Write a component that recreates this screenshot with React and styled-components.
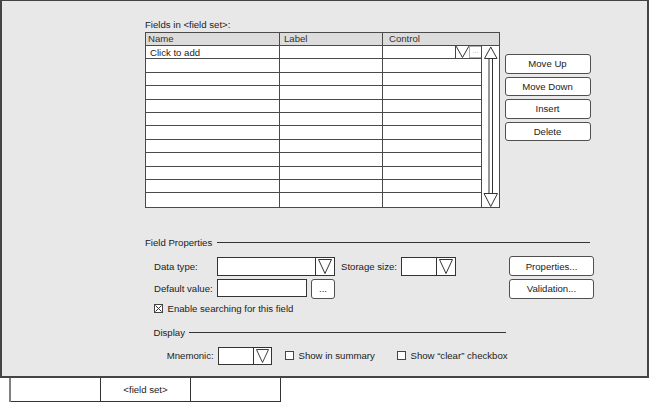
import React from "react";
import styled, { createGlobalStyle } from "styled-components";

const GlobalStyle = createGlobalStyle`
  * { box-sizing: border-box; }
  html, body { margin: 0; padding: 0; background: #fff; }
  body {
    font-family: "Liberation Sans", Arial, sans-serif;
    font-size: 9.6px;
    color: #222;
  }
`;

const Panel = styled.div`
  width: 649px;
  height: 378px;
  background: #e8e8e8;
  border: solid #444;
  border-width: 1px 2px 2px 2px;
  padding: 17.5px 0 0 143px;
`;

const Caption = styled.div`
  height: 13.5px;
  line-height: 12px;
`;

const FieldsRow = styled.div`
  display: flex;
  align-items: flex-start;
`;

const Table = styled.div`
  width: 355px;
  display: grid;
  grid-template-columns: 134px 103px 99px 17px;
  grid-template-rows: 13px repeat(12, 13.42px);
  border: 1px solid #4a4a4a;
  background: #fff;
`;

const HeadCell = styled.div`
  grid-column: ${(p) => p.span || "auto"};
  background: #dcdcdc;
  border-bottom: 1px solid #4a4a4a;
  border-right: ${(p) => (p.end ? "none" : "1px solid #4a4a4a")};
  padding-left: ${(p) => p.pad}px;
  line-height: 12px;
  color: #333;
`;

const Cell = styled.div`
  display: flex;
  align-items: center;
  justify-content: ${(p) => (p.tools ? "flex-end" : "flex-start")};
  border-right: 1px solid #4a4a4a;
  border-bottom: ${(p) => (p.last ? "none" : "1px solid #4a4a4a")};
  padding-left: 4px;
  white-space: nowrap;
  overflow: hidden;
`;

const ScrollCell = styled.div`
  grid-column: 4;
  grid-row: 2 / span 12;
  display: flex;
`;

const PickBox = styled.div`
  width: 14px;
  height: 100%;
  border-left: 1px solid #444;
  display: flex;
`;

const MoreBox = styled.div`
  width: 12px;
  height: 100%;
  border: 1px solid #b0b0b0;
  border-right: none;
  color: #aaa;
  font-size: 7px;
  line-height: 8px;
  text-align: center;
`;

const SideButtons = styled.div`
  display: flex;
  flex-direction: column;
  gap: ${(p) => p.gap}px;
  margin: ${(p) => p.top}px 0 0 ${(p) => p.left}px;
`;

const Button = styled.button`
  width: ${(p) => p.w}px;
  height: ${(p) => p.h}px;
  margin-left: ${(p) => p.left || 0}px;
  padding: 0;
  background: #fff;
  border: 1px solid #505050;
  border-radius: 3px;
  font: inherit;
  color: #222;
`;

const Section = styled.div`
  margin-top: 29px;
`;

const GroupTitle = styled.div`
  display: flex;
  align-items: center;
  height: 12px;
  width: ${(p) => p.w}px;
  margin-left: ${(p) => p.indent || 0}px;

  &::after {
    content: "";
    flex: 1;
    border-top: 1px solid #333;
    margin-left: ${(p) => p.gap}px;
  }
`;

const GroupBody = styled.div`
  display: flex;
  align-items: flex-start;
  padding-left: 9px;
  margin-top: 8px;
`;

const LeftCol = styled.div`
  width: 355px;
  display: flex;
  flex-direction: column;
`;

const Row = styled.div`
  display: flex;
  align-items: ${(p) => p.align || "flex-start"};
  margin-top: ${(p) => p.top || 0}px;
  padding-left: ${(p) => p.pad || 0}px;
  height: ${(p) => (p.h ? p.h + "px" : "auto")};
`;

const Label = styled.div`
  width: ${(p) => p.w}px;
  margin-left: ${(p) => p.left || 0}px;
  white-space: nowrap;
  align-self: center;
`;

const Combo = styled.div`
  display: flex;
  width: ${(p) => p.w}px;
  height: ${(p) => p.h}px;
  background: #fff;
  border: 1px solid #333;
`;

const ComboField = styled.div`
  flex: 1;
`;

const ComboArrow = styled.div`
  width: ${(p) => p.w}px;
  border-left: 1px solid #333;
  display: flex;
  align-items: center;
  justify-content: center;
`;

const TextInput = styled.div`
  width: ${(p) => p.w}px;
  height: 18.5px;
  background: #fff;
  border: 1px solid #333;
`;

const CheckItem = styled.div`
  display: flex;
  align-items: center;
  gap: 4.5px;
  width: ${(p) => (p.w ? p.w + "px" : "auto")};
  margin-left: ${(p) => p.left || 0}px;
  line-height: 12px;
  white-space: nowrap;
`;

const Box = styled.div`
  width: 9px;
  height: 9px;
  background: #fff;
  border: 1px solid #444;
  display: flex;
`;

const TabBar = styled.div`
  display: flex;
  margin-left: 9px;
  border-left: 2px solid #808080;
`;

const Tab = styled.div`
  width: 90px;
  height: 24px;
  background: #fff;
  border-right: 1px solid #333;
  border-bottom: 1px solid #333;
  display: flex;
  align-items: center;
  justify-content: center;
`;

function DownArrow({ w = 14, h = 15 }) {
  return (
    <svg width={w} height={h} viewBox="0 0 14 15">
      <polygon points="0.5,0.5 13.5,0.5 7,14.5" fill="none" stroke="#333" strokeWidth="1" />
    </svg>
  );
}

function ScrollArrows() {
  return (
    <svg width="17" height="161" viewBox="0 0 17 161">
      <g fill="none" stroke="#333" strokeWidth="1">
        <polygon points="2.5,12.5 15,12.5 8.75,1" />
        <polygon points="2,147.5 15.5,147.5 8.75,160.5" />
        <line x1="7" y1="12.5" x2="7" y2="147.5" />
        <line x1="10.5" y1="12.5" x2="10.5" y2="147.5" />
      </g>
    </svg>
  );
}

function Check({ checked }) {
  return (
    <Box>
      {checked && (
        <svg width="7" height="7" viewBox="0 0 7 7">
          <path d="M0.5 0.5 L6.5 6.5 M6.5 0.5 L0.5 6.5" stroke="#333" strokeWidth="1" />
        </svg>
      )}
    </Box>
  );
}

const ROWS = 12;

export default function App() {
  const body = [];
  for (let i = 0; i < ROWS; i++) {
    const last = i === ROWS - 1;
    body.push(
      <Cell key={`n${i}`} last={last}>{i === 0 ? "Click to add" : ""}</Cell>,
      <Cell key={`l${i}`} last={last} />,
      <Cell key={`c${i}`} last={last} tools={i === 0}>
        {i === 0 && (
          <>
            <PickBox>
              <svg width="13" height="12" viewBox="0 0 13 12">
                <polyline points="0,0 6.5,11.5 13,0" fill="none" stroke="#333" strokeWidth="1" />
              </svg>
            </PickBox>
            <MoreBox>...</MoreBox>
          </>
        )}
      </Cell>
    );
  }

  return (
    <>
      <GlobalStyle />
      <Panel>
        <Caption>Fields in &lt;field set&gt;:</Caption>
        <FieldsRow>
          <Table>
            <HeadCell pad={2}>Name</HeadCell>
            <HeadCell pad={4}>Label</HeadCell>
            <HeadCell pad={6} span="3 / span 2" end>Control</HeadCell>
            {body}
            <ScrollCell>
              <ScrollArrows />
            </ScrollCell>
          </Table>
          <SideButtons top={22} left={4.5} gap={3.1}>
            <Button w={86} h={19.5}>Move Up</Button>
            <Button w={86} h={19.5}>Move Down</Button>
            <Button w={86} h={19.5}>Insert</Button>
            <Button w={86} h={19.5}>Delete</Button>
          </SideButtons>
        </FieldsRow>

        <Section>
          <GroupTitle w={445} gap={5}>Field Properties</GroupTitle>
          <GroupBody>
            <LeftCol>
              <Row h={19}>
                <Label w={63}>Data type:</Label>
                <Combo w={118} h={19}>
                  <ComboField />
                  <ComboArrow w={19}><DownArrow /></ComboArrow>
                </Combo>
                <Label w={60} left={6}>Storage size:</Label>
                <Combo w={55} h={19}>
                  <ComboField />
                  <ComboArrow w={19}><DownArrow /></ComboArrow>
                </Combo>
              </Row>
              <Row top={3}>
                <Label w={63}>Default value:</Label>
                <TextInput w={90} />
                <Button w={24} h={20} left={4}>...</Button>
              </Row>
              <Row top={4}>
                <CheckItem>
                  <Check checked />
                  Enable searching for this field
                </CheckItem>
              </Row>
              <Row top={12}>
                <GroupTitle w={352} gap={4} indent={-0.5}>Display</GroupTitle>
              </Row>
              <Row top={8} pad={9} align="center">
                <Label w={54.5}>Mnemonic:</Label>
                <Combo w={54} h={18}>
                  <ComboField />
                  <ComboArrow w={18}><DownArrow w={13} h={14} /></ComboArrow>
                </Combo>
                <CheckItem left={13.5} w={112}>
                  <Check />
                  Show in summary
                </CheckItem>
                <CheckItem>
                  <Check />
                  Show “clear” checkbox
                </CheckItem>
              </Row>
            </LeftCol>
            <SideButtons top={-0.5} left={0} gap={2.6}>
              <Button w={85} h={20}>Properties...</Button>
              <Button w={85} h={20}>Validation...</Button>
            </SideButtons>
          </GroupBody>
        </Section>
      </Panel>
      <TabBar>
        <Tab />
        <Tab>&lt;field set&gt;</Tab>
        <Tab />
      </TabBar>
    </>
  );
}
